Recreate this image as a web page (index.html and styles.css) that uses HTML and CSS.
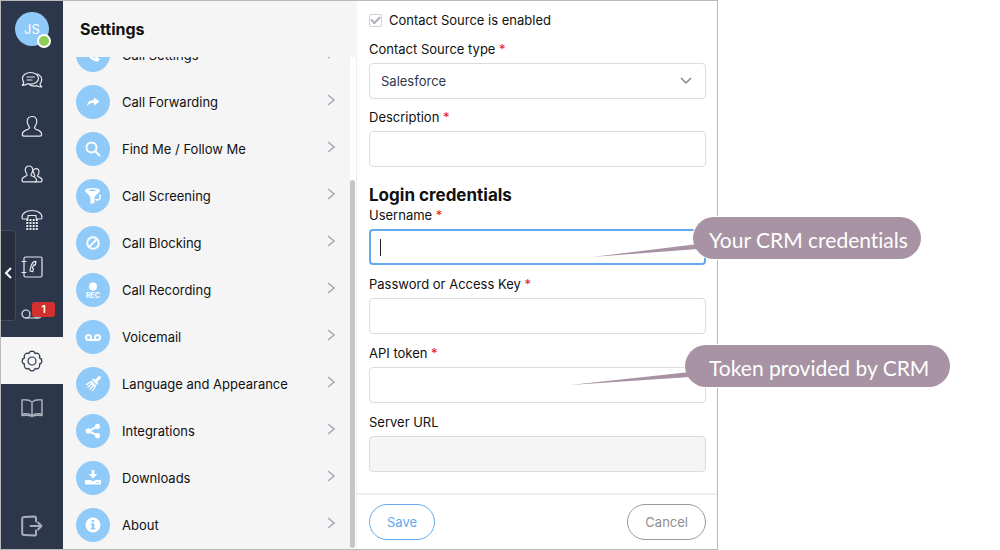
FILE: index.html
```html
<!DOCTYPE html>
<html lang="en">
<head>
    <meta charset="UTF-8">
    <meta name="viewport" content="width=device-width, initial-scale=1.0">
    <title>Settings</title>
    <link rel="stylesheet" href="styles.css">
</head>
<body>

<div class="app">
    <nav class="rail">
        <a class="avatar" href="#" aria-label="Profile">JS<span class="status"></span></a>

        <a class="rail-link" href="#" aria-label="Messages">
            <svg class="icon" viewBox="0 0 22 22"><path d="M9.500 4.500c4.600 0 8 2.500 8 5.800s-3.400 5.800-8 5.800c-1 0-2-.1-2.900-.4-1.200 1-2.800 1.600-5.400 1.600 1-.8 1.500-1.700 1.600-2.900C2 13.300 1.500 12 1.500 10.300c0-3.300 3.400-5.800 8-5.800z"/><path d="M16.500 6c2.600 1.200 4.200 3.200 4.200 5.800 0 1.700-.6 3-1.700 4.100.1 1.200.7 2.300 1.800 3.100-2.200 0-3.700-.5-4.800-1.300-2.800.7-6 .1-8-1.500"/><path d="M6 9h7.500M6 12h5"/></svg>
        </a>
        <a class="rail-link" href="#" aria-label="Profile">
            <svg class="icon" viewBox="0 0 22 22"><path d="M11 1.500c3.200 0 4.800 2.200 4.800 5 0 2-.9 3.500-1.800 4.900-.8 1.300-.5 2.300 1 2.900 3 1.100 5.700 1.700 5.700 5.200 0 1.200-.8 1.700-2 1.700H3.300c-1.200 0-2-.5-2-1.700 0-3.500 2.700-4.100 5.700-5.200 1.500-.6 1.800-1.600 1-2.900C7.100 10 6.200 8.500 6.200 6.500c0-2.800 1.600-5 4.800-5z"/></svg>
        </a>
        <a class="rail-link" href="#" aria-label="Contacts">
            <svg class="icon" viewBox="0 0 22 22"><path d="M8 4c2.400 0 3.700 1.700 3.700 4 0 1.700-.7 2.800-1.300 3.800-.7 1.100-.3 1.800.8 2.200 2.300.8 4.300 1.500 4.300 4.200 0 1-.6 1.600-1.500 1.600H2.500c-.9 0-1.500-.6-1.500-1.600 0-2.700 2-3.400 4-4.200 1.100-.4 1.400-1.100.7-2.200C5.100 10.800 4.300 9.700 4.300 8c0-2.300 1.300-4 3.700-4z"/><path d="M12.500 8.200c.5-1 1.300-1.500 2.500-1.500 2 0 3 1.400 3 3.300 0 1.300-.5 2.100-1 2.900-.6.900-.4 1.500.5 1.900 2 .7 3.600 1.200 3.600 3.400 0 1-.5 1.600-1.400 1.600H14M12.500 9.500c0 1.700.6 2.500 1.100 3.400.4.800.3 1.300-.4 1.700"/></svg>
        </a>
        <a class="rail-link" href="#" aria-label="Dial pad">
            <svg class="icon" viewBox="0 0 22 22"><path d="M1 8.500C1 4 5.500 1.500 11 1.500s10 2.500 10 7c0 1-.6 1.500-1.600 1.500h-2.800c-1 0-1.600-.6-1.600-1.500V6.500H7v2C7 9.400 6.400 10 5.400 10H2.600C1.600 10 1 9.500 1 8.500z"/><path class="dots" d="M6.300 10v11.500M9.500 10v11.500M12.700 10v11.500M15.800 10v11.500"/></svg>
        </a>
        <a class="rail-link" href="#" aria-label="Phone book">
            <svg class="icon" viewBox="0 0 22 22"><rect x="3" y="1" width="18" height="20" rx="1.500"/><path d="M1 5.500h4M1 16.500h4"/><path d="M15 5.500c-1.500-.3-3.300.8-4.300 3-1 2.100-1.500 4-1.700 6.500l2.700.6.800-2.700-1.200-.8c.3-1.400.8-2.400 1.500-3.300l1.400.4z"/></svg>
        </a>
        <a class="rail-link" href="#" aria-label="Voicemail">
            <svg class="icon" viewBox="0 0 22 22"><circle cx="5" cy="11" r="4"/><circle cx="17" cy="11" r="4"/><path d="M5 15h12"/></svg>
            <span class="badge">1</span>
        </a>
        <a class="rail-link active" href="#" aria-label="Settings">
            <svg class="icon" viewBox="0 0 22 22"><circle cx="11" cy="11" r="4"/><path d="M18.400 7.900a3.200 3.200 0 010 6.200 3.200 3.200 0 01-4.300 4.300 3.200 3.200 0 01-6.200 0 3.200 3.200 0 01-4.300-4.300 3.200 3.200 0 010-6.200 3.200 3.200 0 014.300-4.300 3.200 3.200 0 016.200 0 3.200 3.200 0 014.300 4.300z"/></svg>
        </a>
        <a class="rail-link muted" href="#" aria-label="Help">
            <svg class="icon" viewBox="0 0 22 22"><path class="mid" d="M11 5C8.500 3 5 2.500 1 3v15.500c3.500-.2 7-.2 8.500.2l1.500.8 1.500-.8c1.500-.4 5-.4 8.500-.2V3c-4-.5-7.500 0-10 2zM11 5v13M2 17c3.500-.5 6.500-.2 9 1.300 2.500-1.500 5.500-1.800 9-1.300"/></svg>
        </a>
        <a class="rail-link muted sign-out" href="#" aria-label="Sign out">
            <svg class="icon" viewBox="0 0 22 22"><path class="thick" d="M15 6.500V3c0-1-.5-1.500-1.500-1.500L3 2C1.800 2 1.200 2.700 1.200 3.700v14.500c0 1 .6 1.700 1.800 1.700l10.500.6c1 0 1.500-.6 1.500-1.600v-3.500M9.500 11h11M17 7.500l3.500 3.500-3.500 3.500"/></svg>
        </a>

        <button class="collapse" type="button" aria-label="Collapse">
            <svg viewBox="0 0 8 14"><path d="M7 2L2 7l5 5"/></svg>
        </button>
    </nav>

    <section class="settings">
        <h1>Settings</h1>
        <div class="scroller">
            <ul class="menu">
                <li><a href="#"><span class="disc"><svg viewBox="0 0 16 16"><path d="M4 1L1.500 3C1.500 9 7 14.500 13 14.500l2-2.500-3.500-2.500-2 1.500C7.500 10 6 8.500 5 6.500l1.500-2z"/></svg></span><span class="name">Call Settings</span><svg class="arrow" viewBox="0 0 8 12"><path d="M1 1l6 5-6 5"/></svg></a></li>
                <li><a href="#"><span class="disc"><svg viewBox="0 0 16 16"><path d="M9 3.500l5.500 4-5.500 4V9c-3 0-5 .5-7 3 .3-4 3-6 7-6z"/></svg></span><span class="name">Call Forwarding</span><svg class="arrow" viewBox="0 0 8 12"><path d="M1 1l6 5-6 5"/></svg></a></li>
                <li><a href="#"><span class="disc"><svg viewBox="0 0 16 16"><circle class="line" cx="6.500" cy="6.500" r="5"/><path class="line" d="M10.500 10.500l4.500 4.500"/></svg></span><span class="name">Find Me / Follow Me</span><svg class="arrow" viewBox="0 0 8 12"><path d="M1 1l6 5-6 5"/></svg></a></li>
                <li><a href="#"><span class="disc"><svg viewBox="0 0 16 16"><path fill-rule="evenodd" d="M0 2.500C0 1 3.500 0 7.500 0S15 1 15 2.500C15 4.500 9.500 7.500 9.500 10v5l-4 1v-6C5.500 7.500 0 4.500 0 2.500zM3 2.300c2 1 7 1 9 0-2-1-7-1-9 0z"/><path class="fine" d="M14.500 6.500c1.500 2 .8 5-1.500 5.500-1.200.2-2-.4-2.500-1"/></svg></span><span class="name">Call Screening</span><svg class="arrow" viewBox="0 0 8 12"><path d="M1 1l6 5-6 5"/></svg></a></li>
                <li><a href="#"><span class="disc"><svg viewBox="0 0 16 16"><circle class="line" cx="8" cy="8" r="5.800"/><path class="line" d="M4.500 11.500l7-7"/></svg></span><span class="name">Call Blocking</span><svg class="arrow" viewBox="0 0 8 12"><path d="M1 1l6 5-6 5"/></svg></a></li>
                <li><a href="#"><span class="disc"><svg viewBox="0 0 16 16"><circle cx="8" cy="4.500" r="4"/><text x="8" y="15.500">REC</text></svg></span><span class="name">Call Recording</span><svg class="arrow" viewBox="0 0 8 12"><path d="M1 1l6 5-6 5"/></svg></a></li>
                <li><a href="#"><span class="disc"><svg viewBox="0 0 16 16"><circle class="line" cx="3.500" cy="8.500" r="2.500"/><circle class="line" cx="12.500" cy="8.500" r="2.500"/><path class="line" d="M3.500 11h9"/></svg></span><span class="name">Voicemail</span><svg class="arrow" viewBox="0 0 8 12"><path d="M1 1l6 5-6 5"/></svg></a></li>
                <li><a href="#"><span class="disc"><svg viewBox="0 0 16 16"><path d="M15.500.5c.8.800.6 1.500 0 2.200L12.200 6l1.300 1.800-1.300 1.200L7 3.800l1.300-1.300L10 3.800 13.300.5c.7-.6 1.500-.8 2.200 0z"/><path d="M6.200 4.600l5.200 5.200-1.200 1.500-5.500-5.500z"/><path class="fine" d="M5.500 6L1 8.800M7 7.500L2.500 11.200M8.500 9L4.800 13.500M10 10.500L7.300 15"/></svg></span><span class="name">Language and Appearance</span><svg class="arrow" viewBox="0 0 8 12"><path d="M1 1l6 5-6 5"/></svg></a></li>
                <li><a href="#"><span class="disc"><svg viewBox="0 0 16 16"><circle cx="3.500" cy="8" r="2.800"/><circle cx="12.500" cy="3.300" r="2.600"/><circle cx="12.500" cy="12.700" r="2.600"/><path class="line" d="M12.500 3.300L3.500 8l9 4.700"/></svg></span><span class="name">Integrations</span><svg class="arrow" viewBox="0 0 8 12"><path d="M1 1l6 5-6 5"/></svg></a></li>
                <li><a href="#"><span class="disc"><svg viewBox="0 0 16 16"><path d="M6.700 0h2.600v4h3L8 8.500 3.700 4h3z"/><path fill-rule="evenodd" d="M1 10h4.500L8 11.500l2.500-1.500H15c.6 0 1 .4 1 1v2.500c0 .6-.4 1-1 1H1c-.6 0-1-.4-1-1V11c0-.6.4-1 1-1zm10 2v1h1v-1zm2 0v1h1v-1z"/></svg></span><span class="name">Downloads</span><svg class="arrow" viewBox="0 0 8 12"><path d="M1 1l6 5-6 5"/></svg></a></li>
                <li><a href="#"><span class="disc"><svg viewBox="0 0 16 16"><path fill-rule="evenodd" d="M8 .5a7.500 7.500 0 110 15 7.500 7.500 0 010-15zM6.700 3v2.300h2.500V3zM5.700 6.500V8h1v3h-1v1.500h4.600V11h-1V6.500z"/></svg></span><span class="name">About</span><svg class="arrow" viewBox="0 0 8 12"><path d="M1 1l6 5-6 5"/></svg></a></li>
            </ul>
            <div class="track"><div class="thumb"></div></div>
        </div>
    </section>

    <form class="source">
        <div class="fields">
            <div class="check">
                <input type="checkbox" id="enabled" checked disabled>
                <label for="enabled">Contact Source is enabled</label>
            </div>
            <div class="field">
                <label for="type">Contact Source type <em>*</em></label>
                <div class="control">
                    <select id="type"><option>Salesforce</option></select>
                    <svg class="caret-down" viewBox="0 0 12 8"><path d="M1 1l5 5 5-5"/></svg>
                </div>
            </div>
            <div class="field">
                <label for="description">Description <em>*</em></label>
                <input type="text" id="description">
            </div>

            <h2>Login credentials</h2>
            <div class="login">
                <div class="field">
                    <label for="username">Username <em>*</em></label>
                    <div class="control">
                        <input class="focused" type="text" id="username">
                        <span class="cursor"></span>
                        <div class="callout callout-user">
                            <svg class="tail" viewBox="0 0 106 14"><path d="M0 13L106 0v5z"/></svg>
                            Your CRM credentials
                        </div>
                    </div>
                </div>
                <div class="field">
                    <label for="password">Password or Access Key <em>*</em></label>
                    <input type="password" id="password">
                </div>
                <div class="field">
                    <label for="token">API token <em>*</em></label>
                    <div class="control">
                        <input type="text" id="token">
                        <div class="callout callout-token">
                            <svg class="tail" viewBox="0 0 120 14"><path d="M0 13L120 0v5z"/></svg>
                            Token provided by CRM
                        </div>
                    </div>
                </div>
                <div class="field">
                    <label for="server">Server URL</label>
                    <input type="text" id="server" disabled>
                </div>
            </div>
        </div>
        <div class="actions">
            <button class="save" type="button">Save</button>
            <button class="cancel" type="button">Cancel</button>
        </div>
    </form>
</div>

</body>
</html>
```

FILE: styles.css
```css
* {
    box-sizing: border-box;
}

body {
    margin: 0;
    padding-right: 282px;
    background: #fff;
    color: #111;
    font-family: Inter, sans-serif;
    font-size: 13px;
    line-height: 20px;
}

a {
    color: inherit;
    text-decoration: none;
}

.app {
    display: grid;
    grid-template-columns: 62px 294px 1fr;
    height: 100vh;
    min-height: 550px;
    border: 1px solid #b9b9b9;
}

/* Icon rail */
.rail {
    position: relative;
    display: flex;
    flex-direction: column;
    background: #2d374b;
    color: #e3e7ee;
}

.avatar {
    position: relative;
    display: flex;
    align-items: center;
    justify-content: center;
    width: 34px;
    height: 34px;
    margin: 11px 14px 9px;
    border-radius: 50%;
    background: #90caf9;
    color: #fff;
    font-size: 13px;
}

.status {
    position: absolute;
    right: -2px;
    bottom: -2px;
    width: 14px;
    height: 14px;
    border: 2px solid #fff;
    border-radius: 50%;
    background: #8fce55;
}

.rail-link {
    position: relative;
    display: flex;
    align-items: center;
    justify-content: center;
    height: 47px;
}

.icon {
    width: 22px;
    height: 22px;
    fill: none;
    stroke: currentColor;
    stroke-width: 1.2;
    stroke-linejoin: round;
    stroke-linecap: round;
}

.icon .dots {
    stroke-width: 2;
    stroke-dasharray: 2 1;
    stroke-linecap: butt;
}

.icon .mid {
    stroke-width: 1.5;
}

.icon .thick {
    stroke-width: 2;
}

.rail-link.active {
    background: #f5f5f5;
    color: #2d374b;
}

.rail-link.muted {
    color: #a9afba;
}

.rail-link.sign-out {
    margin-top: auto;
}

.badge {
    position: absolute;
    left: 31px;
    top: 12px;
    width: 23px;
    height: 15px;
    border-radius: 3px;
    background: #d32f2f;
    color: #fff;
    font-size: 11px;
    font-weight: 600;
    line-height: 15px;
    text-align: center;
}

.collapse {
    position: absolute;
    left: 0;
    top: 229px;
    display: flex;
    align-items: center;
    width: 15px;
    height: 91px;
    padding: 0 3px;
    border: 1px solid #454b59;
    border-left: 0;
    border-radius: 0 4px 4px 0;
    background: #282e3d;
}

.collapse svg {
    width: 8px;
    height: 14px;
    margin-top: -6px;
    fill: none;
    stroke: #fff;
    stroke-width: 2;
}

/* Settings menu */
.settings {
    display: flex;
    flex-direction: column;
    min-height: 0;
    background: #f5f5f5;
}

.settings h1 {
    height: 56px;
    flex: none;
    margin: 0;
    padding-left: 17px;
    font-size: 16px;
    font-weight: 700;
    line-height: 56px;
}

.scroller {
    display: flex;
    flex: 1;
    min-height: 0;
}

.menu {
    display: flex;
    flex: 1;
    flex-direction: column;
    justify-content: flex-end;
    margin: 0;
    padding: 0 0 1px;
    overflow: hidden;
    list-style: none;
}

.menu a {
    display: flex;
    align-items: center;
    height: 47px;
    padding: 0 15px 0 13px;
}

.disc {
    display: flex;
    align-items: center;
    justify-content: center;
    width: 34px;
    height: 34px;
    margin-right: 12px;
    border-radius: 50%;
    background: #90caf9;
}

.disc svg {
    width: 16px;
    height: 16px;
    overflow: visible;
    fill: #fff;
}

.disc .line,
.disc .fine {
    fill: none;
    stroke: #fff;
    stroke-width: 2;
}

.disc .fine {
    stroke-width: 1.4;
}

.disc text {
    font-size: 7px;
    font-weight: 700;
    text-anchor: middle;
}

.name {
    flex: 1;
}

.arrow {
    width: 8px;
    height: 12px;
    margin-bottom: 4px;
    fill: none;
    stroke: #a5a9b5;
    stroke-width: 1.5;
}

.track {
    display: flex;
    align-items: flex-end;
    width: 7px;
    padding-bottom: 1px;
    background: #fff;
    border-right: 1px solid #eee;
}

.thumb {
    width: 5px;
    height: 75%;
    border-radius: 3px;
    background: #c6c6c6;
}

/* Contact source form */
.source {
    display: flex;
    flex-direction: column;
    min-width: 0;
    background: #fff;
}

.fields {
    flex: 1;
    padding: 9px 11px 0 12px;
}

.check {
    display: flex;
    align-items: center;
    gap: 7px;
    margin-bottom: 9px;
}

.check input {
    display: grid;
    place-items: center;
    width: 13px;
    height: 13px;
    margin: 0;
    appearance: none;
    border: 1px solid #cfd1da;
    border-radius: 2px;
    background: #fff;
}

.check input:checked::before {
    content: "";
    width: 7px;
    height: 4px;
    margin-bottom: 2px;
    border: solid #a9adb9;
    border-width: 0 0 2px 2px;
    transform: rotate(-45deg);
}

.field {
    display: flex;
    flex-direction: column;
    gap: 4px;
    margin-bottom: 8px;
}

.field em {
    color: #e02020;
    font-style: normal;
}

.control {
    position: relative;
    display: flex;
}

.field input,
.field select {
    width: 100%;
    height: 36px;
    padding: 0 11px;
    border: 1px solid #dcdcdc;
    border-radius: 4px;
    outline: 0;
    background: #fff;
    color: #2d374b;
    font: inherit;
}

.field select {
    appearance: none;
}

.field input:disabled {
    background: #f5f5f5;
}

.field input.focused {
    border: 2px solid #64a9f0;
}

.cursor {
    position: absolute;
    left: 11px;
    top: 10px;
    width: 1px;
    height: 17px;
    background: #222;
}

.caret-down {
    position: absolute;
    right: 14px;
    top: 14px;
    width: 12px;
    height: 8px;
    fill: none;
    stroke: #8b8b8b;
    stroke-width: 1.5;
    pointer-events: none;
}

.source h2 {
    margin: 16px 0 -2px;
    font-size: 17px;
    font-weight: 700;
    line-height: 24px;
}

.login .field {
    margin-bottom: 9px;
}

.actions {
    display: flex;
    justify-content: space-between;
    padding: 9px 11px 9px 12px;
    border-top: 2px solid #eee;
}

.actions button {
    height: 36px;
    padding: 0 17px;
    border: 1px solid #64a9f0;
    border-radius: 18px;
    background: #fff;
    color: #64a9f0;
    font: inherit;
}

.actions .cancel {
    border-color: #999;
    color: #8f8f8f;
}

/* Callouts */
.callout {
    position: absolute;
    z-index: 1;
    height: 42px;
    border-radius: 21px;
    background: #a793a3;
    box-shadow: 0 0 0 1px #fff;
    color: #fff;
    font-family: "Trebuchet MS", Lato, sans-serif;
    font-size: 21px;
    font-variant-ligatures: none;
    line-height: 46px;
    white-space: nowrap;
}

.callout-user {
    left: calc(100% - 13px);
    top: -12px;
    padding: 0 13px 0 16px;
}

.callout-token {
    left: calc(100% - 21px);
    top: -22px;
    padding: 0 21px 0 24px;
}

.tail {
    position: absolute;
    right: calc(100% - 5px);
    top: 27px;
    height: 14px;
    fill: #a793a3;
}
```
